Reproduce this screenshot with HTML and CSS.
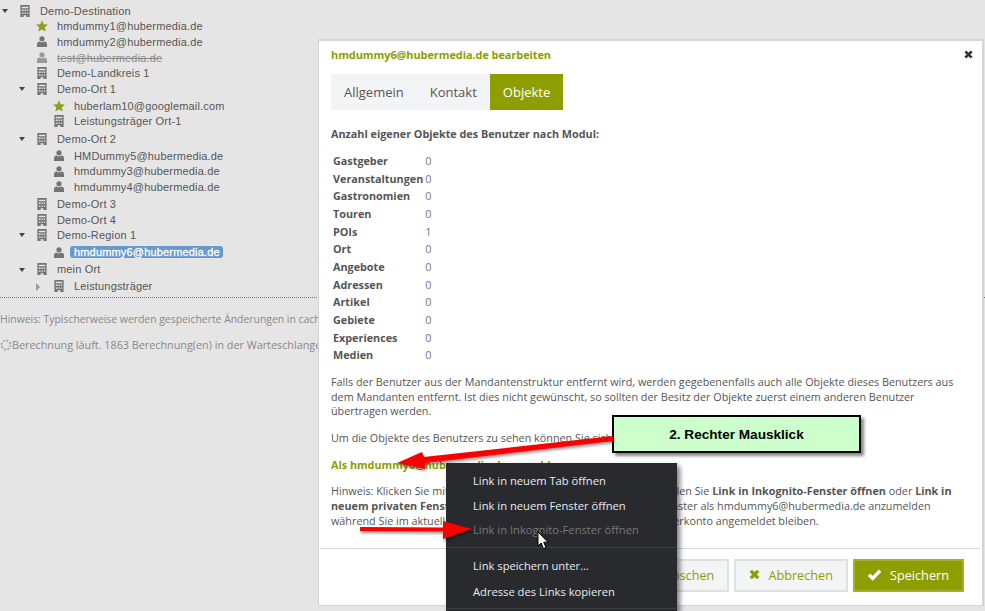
FILE: index.html
```html
<!DOCTYPE html>
<html lang="de">
<head>
    <meta charset="UTF-8">
    <meta name="viewport" content="width=device-width, initial-scale=1.0">
    <title>Benutzer bearbeiten</title>
    <link rel="stylesheet" href="styles.css">
</head>
<body>
    <svg class="defs" width="0" height="0">
        <symbol id="i-house" viewBox="0 0 10 13">
            <path fill-rule="evenodd" d="M0 0H10V13H0ZM1.5 2V3.5H8.5V2ZM1.5 5V6.5H3.5V5ZM4.5 5V6.5H6V5ZM7 5V6.5H8.5V5ZM1.5 8V9.5H3.5V8ZM4.5 8V9.5H6V8ZM7 8V9.5H8.5V8ZM3.5 11V13H6.5V11Z"/>
        </symbol>
        <symbol id="i-user" viewBox="0 0 10 11">
            <circle cx="5" cy="2.8" r="2.6"/>
            <path d="M0 11V8.2C0 6.6 1.2 5.6 2.6 5.4C3.4 6 4.2 6.2 5 6.2C5.8 6.2 6.6 6 7.4 5.4C8.8 5.6 10 6.6 10 8.2V11Z"/>
        </symbol>
        <symbol id="i-star" viewBox="0 0 12 12">
            <polygon points="6,0.3 7.7,4.2 11.9,4.6 8.7,7.4 9.7,11.6 6,9.4 2.3,11.6 3.3,7.4 0.1,4.6 4.3,4.2"/>
        </symbol>
    </svg>

    <div class="page">
        <ul class="tree">
            <li>
                <div class="node"><span class="toggle open"></span><svg class="ico ico-house"><use href="#i-house"/></svg><span class="label">Demo-Destination</span></div>
                <ul>
                    <li><div class="node"><span class="toggle"></span><svg class="ico ico-star"><use href="#i-star"/></svg><span class="label">hmdummy1@hubermedia.de</span></div></li>
                    <li><div class="node"><span class="toggle"></span><svg class="ico ico-user"><use href="#i-user"/></svg><span class="label">hmdummy2@hubermedia.de</span></div></li>
                    <li><div class="node disabled"><span class="toggle"></span><svg class="ico ico-user"><use href="#i-user"/></svg><span class="label">test@hubermedia.de</span></div></li>
                    <li><div class="node"><span class="toggle"></span><svg class="ico ico-house"><use href="#i-house"/></svg><span class="label">Demo-Landkreis 1</span></div></li>
                    <li>
                        <div class="node"><span class="toggle open"></span><svg class="ico ico-house"><use href="#i-house"/></svg><span class="label">Demo-Ort 1</span></div>
                        <ul class="sub">
                            <li><div class="node"><span class="toggle"></span><svg class="ico ico-star"><use href="#i-star"/></svg><span class="label">huberlam10@googlemail.com</span></div></li>
                            <li><div class="node"><span class="toggle"></span><svg class="ico ico-house"><use href="#i-house"/></svg><span class="label">Leistungsträger Ort-1</span></div></li>
                        </ul>
                    </li>
                    <li>
                        <div class="node"><span class="toggle open"></span><svg class="ico ico-house"><use href="#i-house"/></svg><span class="label">Demo-Ort 2</span></div>
                        <ul class="sub">
                            <li><div class="node"><span class="toggle"></span><svg class="ico ico-user"><use href="#i-user"/></svg><span class="label">HMDummy5@hubermedia.de</span></div></li>
                            <li><div class="node"><span class="toggle"></span><svg class="ico ico-user"><use href="#i-user"/></svg><span class="label">hmdummy3@hubermedia.de</span></div></li>
                            <li><div class="node"><span class="toggle"></span><svg class="ico ico-user"><use href="#i-user"/></svg><span class="label">hmdummy4@hubermedia.de</span></div></li>
                        </ul>
                    </li>
                    <li><div class="node"><span class="toggle"></span><svg class="ico ico-house"><use href="#i-house"/></svg><span class="label">Demo-Ort 3</span></div></li>
                    <li><div class="node"><span class="toggle"></span><svg class="ico ico-house"><use href="#i-house"/></svg><span class="label">Demo-Ort 4</span></div></li>
                    <li>
                        <div class="node"><span class="toggle open"></span><svg class="ico ico-house"><use href="#i-house"/></svg><span class="label">Demo-Region 1</span></div>
                        <ul class="sub">
                            <li><div class="node selected"><span class="toggle"></span><svg class="ico ico-user"><use href="#i-user"/></svg><span class="label">hmdummy6@hubermedia.de</span></div></li>
                        </ul>
                    </li>
                    <li>
                        <div class="node"><span class="toggle open"></span><svg class="ico ico-house"><use href="#i-house"/></svg><span class="label">mein Ort</span></div>
                        <ul class="sub">
                            <li><div class="node"><span class="toggle closed"></span><svg class="ico ico-house"><use href="#i-house"/></svg><span class="label">Leistungsträger</span></div></li>
                        </ul>
                    </li>
                </ul>
            </li>
        </ul>

        <div class="status">
            <p class="hint">Hinweis: Typischerweise werden gespeicherte Änderungen in cachebasierten Ansichten erst später sichtbar.</p>
            <p class="queue">
                <svg class="spinner" viewBox="0 0 12 12"><circle cx="6" cy="6" r="4.5"/></svg>Berechnung läuft. 1863 Berechnung(en) in der Warteschlange.
            </p>
        </div>
    </div>

    <div class="modal">
        <div class="modal-head">
            <h2>hmdummy6@hubermedia.de bearbeiten</h2>
            <svg class="close" viewBox="0 0 10 10"><path d="M1.5 1.5L8.5 8.5M8.5 1.5L1.5 8.5"/></svg>
        </div>
        <div class="tabs">
            <a class="tab">Allgemein</a>
            <a class="tab">Kontakt</a>
            <a class="tab active">Objekte</a>
        </div>
        <div class="modal-body">
            <p class="lead">Anzahl eigener Objekte des Benutzer nach Modul:</p>
            <table class="counts">
                <tr><th>Gastgeber</th><td>0</td></tr>
                <tr><th>Veranstaltungen</th><td>0</td></tr>
                <tr><th>Gastronomien</th><td>0</td></tr>
                <tr><th>Touren</th><td>0</td></tr>
                <tr><th>POIs</th><td>1</td></tr>
                <tr><th>Ort</th><td>0</td></tr>
                <tr><th>Angebote</th><td>0</td></tr>
                <tr><th>Adressen</th><td>0</td></tr>
                <tr><th>Artikel</th><td>0</td></tr>
                <tr><th>Gebiete</th><td>0</td></tr>
                <tr><th>Experiences</th><td>0</td></tr>
                <tr><th>Medien</th><td>0</td></tr>
            </table>
            <p>Falls der Benutzer aus der Mandantenstruktur entfernt wird, werden gegebenenfalls auch alle Objekte dieses Benutzers aus dem Mandanten entfernt. Ist dies nicht gewünscht, so sollten der Besitz der Objekte zuerst einem anderen Benutzer übertragen werden.</p>
            <p>Um die Objekte des Benutzers zu sehen können Sie sich als dieser Benutzer anmelden:</p>
            <p><a class="login">Als hmdummy6@hubermedia.de anmelden</a></p>
            <p>Hinweis: Klicken Sie mit der rechten Maustaste auf den Link und wählen Sie <b>Link in Inkognito-Fenster öffnen</b> oder <b>Link in neuem privaten Fenster öffnen</b>, um sich damit in einem neuen Fenster als hmdummy6@hubermedia.de anzumelden während Sie im aktuellen Fenster mit Ihrem jetzigen eigenen Benutzerkonto angemeldet bleiben.</p>
        </div>
        <div class="modal-foot">
            <button class="btn">Benutzer löschen</button>
            <button class="btn">
                <svg class="btn-ico" viewBox="0 0 12 12"><path class="x" d="M2 2L10 10M10 2L2 10"/></svg>Abbrechen
            </button>
            <button class="btn primary">
                <svg class="btn-ico" viewBox="0 0 14 12"><path class="tick" d="M1.8 6.2L5.4 9.6L12.2 2.4"/></svg>Speichern
            </button>
        </div>
    </div>

    <div class="callout">2. Rechter Mausklick</div>

    <ul class="menu">
        <li>Link in neuem Tab öffnen</li>
        <li>Link in neuem Fenster öffnen</li>
        <li class="off">Link in Inkognito-Fenster öffnen</li>
        <li class="sep"></li>
        <li>Link speichern unter...</li>
        <li class="last">Adresse des Links kopieren</li>
        <li class="sep"></li>
    </ul>

    <!-- Pfeile und Mauszeiger liegen ueber allem -->
    <svg class="marks" viewBox="0 0 985 611">
        <g class="arrow">
            <polygon points="613,436 613,441 425,463 425,469 397,463 422,452 424,457"/>
            <polygon points="360,527 443,527.5 443,521 472,529 443,539 443,531.5 360,531"/>
        </g>
        <path class="pointer" d="M538 532V546L541.2 543L543.4 548.6L546 547.5L543.7 542.2H548Z"/>
    </svg>
</body>
</html>
```

FILE: styles.css
```css
* {
    box-sizing: border-box;
}

html,
body {
    height: 100%;
}

body {
    margin: 0;
    overflow: hidden;
    background: #e5e5e5;
    font-family: 'Open Sans', sans-serif;
    font-size: 10.8px;
    color: #555;
}

.defs {
    position: absolute;
}

/* Baum links */
.page {
    padding-top: 3px;
}

.tree,
.tree ul {
    list-style: none;
    margin: 0;
    padding: 0;
}

.tree ul {
    padding-left: 17px;
}

.tree .sub {
    margin: 1.5px 0;
}

.node {
    display: flex;
    align-items: center;
    height: 15.6px;
    font-family: 'Liberation Sans', sans-serif;
    font-size: 11px;
    letter-spacing: 0.17px;
    color: #555;
    white-space: nowrap;
}

.toggle {
    width: 20px;
    flex: none;
    position: relative;
    height: 100%;
}

.toggle.open::before {
    content: "";
    position: absolute;
    left: 2px;
    top: 6px;
    border-left: 3.5px solid transparent;
    border-right: 3.5px solid transparent;
    border-top: 4px solid #444;
}

.toggle.closed::before {
    content: "";
    position: absolute;
    left: 2px;
    top: 4px;
    border-top: 4px solid transparent;
    border-bottom: 4px solid transparent;
    border-left: 4px solid #999;
}

.ico {
    flex: none;
    width: 10px;
    height: 12px;
    margin-right: 10px;
    fill: #737373;
}

.ico-user {
    height: 11px;
}

.ico-star {
    width: 12px;
    height: 12px;
    margin-left: -1px;
    margin-right: 9px;
    fill: #8e9e1e;
}

.disabled {
    color: #8a8a8a;
}

.disabled .label {
    text-decoration: line-through;
}

.disabled .ico {
    fill: #999;
}

.selected .label {
    margin-left: -4px;
    padding: 0 3px 0 4px;
    border-radius: 3px;
    background: #6699cc;
    color: #fff;
    -webkit-text-stroke: 0.3px #fff;
}

.status {
    margin-top: 3px;
    border-top: 1px dotted #777;
    color: #888;
    white-space: nowrap;
}

.hint {
    margin: 13px 0 0;
    line-height: 16px;
    font-size: 10.4px;
}

.queue {
    margin: 10px 0 0;
    line-height: 16px;
    display: flex;
    align-items: center;
    font-size: 10.8px;
}

.spinner {
    width: 12px;
    height: 12px;
    fill: none;
    stroke: #aaa;
    stroke-width: 2;
    stroke-dasharray: 2 1.5;
}

/* Dialog */
.modal {
    position: absolute;
    left: 318px;
    top: 39px;
    width: 666px;
    height: 567px;
    display: flex;
    flex-direction: column;
    background: #fff;
    border: 2px solid #d4d4d4;
    border-left-width: 1px;
    border-bottom-width: 1px;
}

.modal-head {
    display: flex;
    justify-content: space-between;
    align-items: center;
    padding: 0 9px 0 12px;
    height: 26px;
}

.modal-head h2 {
    margin: 0;
    font-size: 11px;
    font-weight: bold;
    letter-spacing: -0.1px;
    color: #8e9e00;
}

.close {
    width: 9px;
    height: 9px;
    fill: none;
    stroke: #333;
    stroke-width: 3;
}

.tabs {
    display: flex;
    align-self: flex-start;
    margin: 7px 0 0 12px;
    background: #f3f4f6;
}

.tab {
    height: 36px;
    line-height: 36px;
    padding: 0 13px;
    font-size: 13px;
    color: #555;
}

.tab.active {
    background: #8e9e00;
    color: #fff;
}

.modal-body {
    flex: 1;
    padding: 0 12px;
    line-height: 14.7px;
}

.modal-body p {
    margin: 0 0 12px;
}

.modal-body .lead {
    margin: 17px 0 11px;
    font-weight: bold;
}

.counts {
    border-collapse: collapse;
    margin-bottom: 10.5px;
}

.counts th {
    height: 17.65px;
    padding: 0 2px;
    text-align: left;
    font-weight: bold;
}

.counts td {
    padding: 0;
    color: #777;
}

.login {
    font-weight: bold;
    color: #8e9e00;
}

.modal-foot {
    display: flex;
    justify-content: flex-end;
    gap: 5px;
    height: 57px;
    margin-left: 1px;
    margin-right: 1px;
    padding: 10px 17px 0 0;
    border-top: 1px solid #d5d9d9;
}

.btn {
    display: flex;
    align-items: center;
    height: 33px;
    padding: 0 13px 2px 13px;
    border: 2px solid #dfe1e1;
    background: #f3f4f6;
    font-family: 'Open Sans', sans-serif;
    font-size: 12.7px;
    color: #8e9e00;
}

.btn.primary {
    padding: 0 13px 2px 12px;
    background: #8e9e00;
    border-color: #a3b02e;
    color: #fff;
}

.btn-ico {
    height: 11px;
    width: 11px;
    margin-right: 8px;
    fill: none;
}

.primary .btn-ico {
    width: 15px;
    height: 13px;
}

.x {
    stroke: #8e9e00;
    stroke-width: 3.6;
}

.tick {
    stroke: #fff;
    stroke-width: 3.2;
}

/* Markierungen im Screenshot */
.callout {
    position: absolute;
    left: 612px;
    top: 415px;
    width: 249px;
    height: 38px;
    border: 2px solid #000;
    background: #ccffcc;
    box-shadow: 3px 3px 3px #888;
    text-align: center;
    line-height: 35px;
    font-family: 'Liberation Sans', sans-serif;
    font-size: 13.6px;
    font-weight: bold;
    color: #000;
}

.menu {
    position: absolute;
    left: 446px;
    top: 463px;
    width: 231px;
    height: 160px;
    list-style: none;
    margin: 0;
    padding: 6px 0 0;
    background: #292a2d;
    box-shadow: 3px 3px 5px rgba(0, 0, 0, 0.5);
    font-size: 11.2px;
    color: #e8eaed;
}

.menu li {
    height: 24.5px;
    line-height: 24px;
    padding-left: 27px;
}

.menu .off {
    color: #77797d;
}

.menu .last {
    margin-top: 1.5px;
}

.menu .sep {
    height: 1px;
    margin: 4px 1px 6px;
    padding: 0;
    background: #3f4043;
}

.marks {
    position: absolute;
    left: 0;
    top: 0;
    width: 985px;
    height: 611px;
}

.arrow {
    fill: #fa0000;
    filter: drop-shadow(1px 2px 1.5px rgba(0, 0, 0, 0.45));
}

.pointer {
    fill: #fff;
    stroke: #000;
    stroke-width: 1;
}
```
